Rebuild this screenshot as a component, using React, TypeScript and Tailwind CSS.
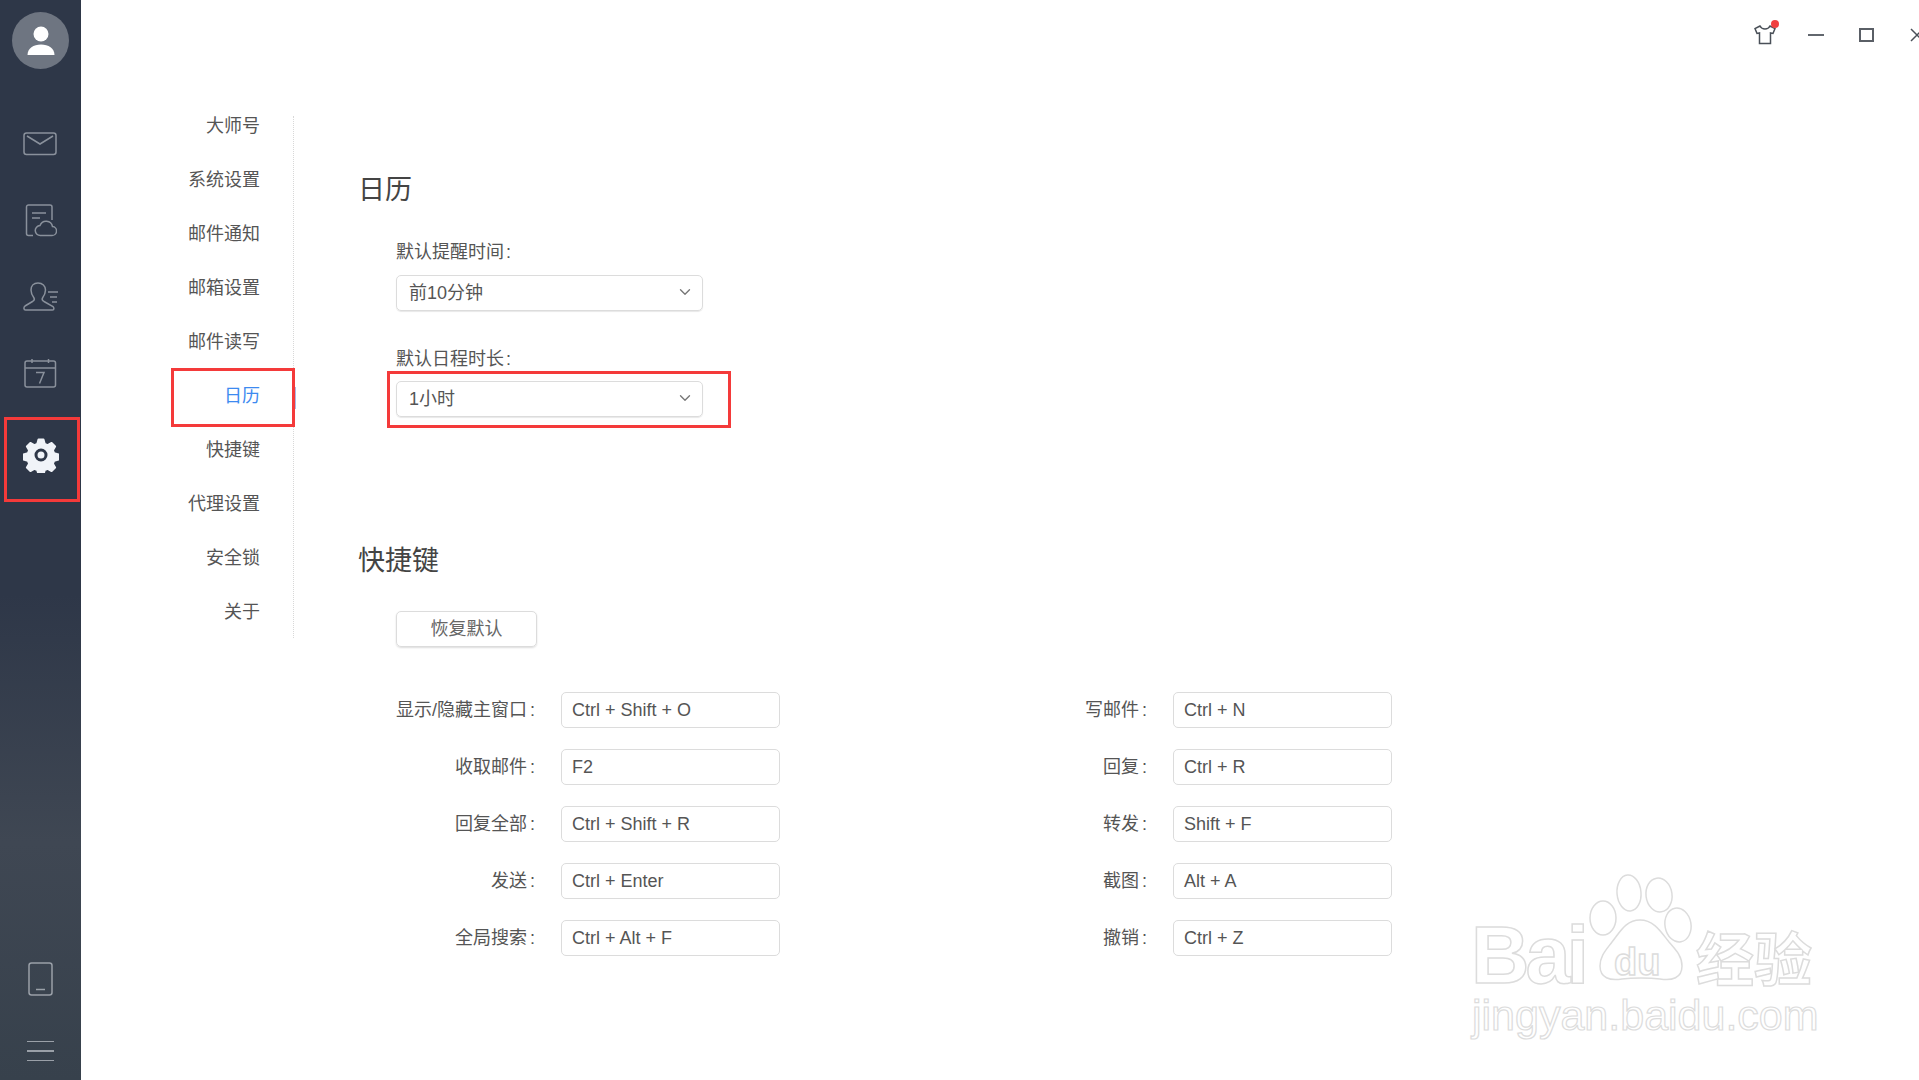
import React from 'react';
import { ChevronDown } from 'lucide-react';

const navItems = ['大师号', '系统设置', '邮件通知', '邮箱设置', '邮件读写', '日历', '快捷键', '代理设置', '安全锁', '关于'];

const shortcuts = [
  ['显示/隐藏主窗口', 'Ctrl + Shift + O', '写邮件', 'Ctrl + N'],
  ['收取邮件', 'F2', '回复', 'Ctrl + R'],
  ['回复全部', 'Ctrl + Shift + R', '转发', 'Shift + F'],
  ['发送', 'Ctrl + Enter', '截图', 'Alt + A'],
  ['全局搜索', 'Ctrl + Alt + F', '撤销', 'Ctrl + Z'],
];

const Sidebar: React.FC = () => {
  return (
    <aside className="w-[81px] h-full shrink-0 flex flex-col items-center bg-[linear-gradient(180deg,#2e3748_0%,#2e3748_55%,#3f4753_78%,#37414c_100%)]">
      <div className="mt-3 w-[57px] h-[57px] rounded-full bg-[#6e7581] flex items-center justify-center">
        <svg width="28" height="30" viewBox="0 0 28 30" fill="#fff">
          <circle cx="14" cy="8" r="7.5" />
          <path d="M0.5 29c0-6.5 6-10.5 13.5-10.5S27.500 22.500 27.500 29z" />
        </svg>
      </div>
      <div className="mt-[36px] h-[77px] flex items-center">
        <svg width="35" height="24" viewBox="0 0 35 24" fill="none" stroke="#8a919c" strokeWidth="1.5">
          <rect x="1" y="1" width="32" height="21.500" rx="2.500" />
          <path d="M4 4l13 8 13-8" />
        </svg>
      </div>
      <div className="h-[77px] flex items-center">
        <svg width="32" height="33" viewBox="0 0 32 33" fill="none" stroke="#8a919c" strokeWidth="1.5">
          <path d="M8 31.500H3.500A2 2 0 0 1 1.500 29.500V3A2 2 0 0 1 3.500 1H25A2 2 0 0 1 27 3V16" />
          <path d="M7 9h14M7 14h8" />
          <path d="M15 31.500h11.500a4.500 4.500 0 0 0 1-9 6.500 6.500 0 0 0-12.500-1 5 5 0 0 0 .500 10z" />
        </svg>
      </div>
      <div className="h-[75px] flex items-center">
        <svg width="36" height="30" viewBox="0 0 36 30" fill="none" stroke="#8a919c" strokeWidth="1.5">
          <path d="M15 1c-4.500 0-7 3-7 7 0 3 1.500 6 3 8 1 1.500 0 2.500-1.500 3.500L2 24c-1.500 1-1.500 4 .500 4h27c2 0 1.500-2.500.500-3.500L21 19.500c-1.500-1-2.500-2-1.500-3.500 1.500-2 3-5 3-8 0-4-3-7-7.500-7z" />
          <path d="M25 10h10M27 15h7M29 20h5" />
        </svg>
      </div>
      <div className="h-[77px] flex items-center">
        <svg width="33" height="30" viewBox="0 0 33 30" fill="none" stroke="#8a919c" strokeWidth="1.5">
          <rect x="1" y="3" width="30.500" height="26" rx="2" />
          <path d="M1 10h30.500M8 1v4M24.500 1v4" />
          <path d="M12 14.500h8l-4.500 11" />
        </svg>
      </div>
      <div className="mt-[5px] h-[77px] flex items-center">
        <svg width="36" height="36" viewBox="0 0 36 36">
          <path
            fillRule="evenodd"
            fill="#f0f3f8"
            stroke="#f0f3f8"
            strokeWidth="2"
            strokeLinejoin="round"
            d="M15.500 2.500h5l1.200 4.300 3 1.300 3.900-2.200 3.500 3.500-2.200 3.900 1.300 3 4.300 1.200v5l-4.300 1.200-1.300 3 2.200 3.900-3.500 3.500-3.900-2.200-3 1.300-1.200 4.300h-5l-1.200-4.300-3-1.300-3.900 2.200-3.500-3.500 2.200-3.900-1.300-3-4.300-1.200v-5l4.300-1.200 1.300-3-2.200-3.900 3.500-3.500 3.900 2.200 3-1.300z"
          />
          <circle cx="18" cy="18" r="5" fill="none" stroke="#2e3748" strokeWidth="3" />
        </svg>
      </div>
      <div className="mt-auto mb-[45px]">
        <svg width="25" height="34" viewBox="0 0 25 34" fill="none" stroke="#9aa0a8" strokeWidth="1.5" className="block">
          <rect x="1" y="1" width="23" height="32" rx="2.500" />
          <path d="M8 27.500h9" />
        </svg>
      </div>
      <div className="mb-[19px] w-[27px] flex flex-col gap-[8px]">
        <div className="h-[1.500px] bg-[#9aa0a8]" />
        <div className="h-[1.500px] bg-[#9aa0a8]" />
        <div className="h-[1.500px] bg-[#9aa0a8]" />
      </div>
    </aside>
  );
};

const SelectBox: React.FC<{ value: string }> = ({ value }) => {
  return (
    <div className="w-[307px] h-[36px] rounded-[5px] border border-[#dcdcdc] shadow-[0_1px_1px_#e8e8e8] flex items-center justify-between pl-[12px] pr-[8px] text-[18px] text-[#555]">
      <span>{value}</span>
      <ChevronDown size={18} color="#777" strokeWidth={1.8} className="-mt-[2px]" />
    </div>
  );
};

const KeyRow: React.FC<{ label: string; value: string }> = ({ label, value }) => {
  return (
    <div className="flex items-center h-[36px]">
      <div className="w-[140px] text-right text-[18px] text-[#555] whitespace-nowrap">
        {label}
        <span className="ml-[3px] mr-[1px]">:</span>
      </div>
      <div className="ml-[25px] w-[219px] h-[36px] rounded-[5px] border border-[#dcdcdc] flex items-center pl-[10px] text-[18px] text-[#555]">
        {value}
      </div>
    </div>
  );
};

const Watermark: React.FC = () => {
  return (
    <svg width="400" height="200" viewBox="0 0 400 200" className="absolute left-[1440px] top-[850px] pointer-events-none">
      <g fill="#fff" stroke="#dcdcdc" strokeWidth="1.500">
        <ellipse cx="163" cy="68" rx="13" ry="17" />
        <ellipse cx="189" cy="43" rx="12" ry="18" transform="rotate(-5 189 43)" />
        <ellipse cx="219" cy="45" rx="13" ry="17" transform="rotate(-8 219 45)" />
        <ellipse cx="238" cy="75" rx="13" ry="17" transform="rotate(-10 238 75)" />
        <path d="M200 70c-14 0-20 12-28 22-6 8-12 14-12 24 0 12 10 15 22 13 8-1 12-1 19-1s11 0 19 1c12 2 22-1 22-13 0-10-6-16-13-24-8-10-15-22-29-22z" />
        <text x="31" y="133" fontFamily="Liberation Sans, sans-serif" fontSize="81" fontWeight="700" letterSpacing="-4">Bai</text>
        <text x="174" y="125" fontFamily="Liberation Sans, sans-serif" fontSize="38" fontWeight="700">du</text>
        <text x="256" y="131" fontFamily="Noto Sans CJK SC, sans-serif" fontSize="58" fontWeight="700">经验</text>
      </g>
      <text x="32" y="180" fontFamily="Liberation Sans, sans-serif" fontSize="43" fill="#fff" stroke="#dcdcdc" strokeWidth="1.200">jingyan.baidu.com</text>
    </svg>
  );
};

export default function App() {
  return (
    <div className="relative w-[1919px] h-[1080px] overflow-hidden bg-white flex font-['Liberation_Sans','Noto_Sans_CJK_SC',sans-serif]">
      <Sidebar />

      {/* settings menu */}
      <nav className="w-[214px] shrink-0 pt-[116px]">
        <div className="relative flex flex-col h-[522px] w-[213px] border-r border-dotted border-[#d8d8d8]">
          <ul className="-mt-[17px]">
            {navItems.map((item) => (
              <li
                key={item}
                className={`h-[54px] flex items-center justify-end pr-[33px] text-[18px] ${item === '日历' ? 'text-[#3d8af0]' : 'text-[#555]'}`}
              >
                {item}
              </li>
            ))}
          </ul>
          <div className="absolute right-[-3px] top-[271px] w-[3px] h-[22px] bg-[#a9bbe5]" />
        </div>
      </nav>

      <main className="flex-1 pl-[63px]">
        <h2 className="mt-[172px] text-[27px] leading-[36px] text-[#444]">日历</h2>
        <div className="pl-[38px]">
          <div className="mt-[31px] text-[18px] leading-[26px] text-[#555]">
            默认提醒时间<span className="ml-[2px]">:</span>
          </div>
          <div className="mt-[10px]">
            <SelectBox value="前10分钟" />
          </div>
          <div className="mt-[35px] text-[18px] leading-[26px] text-[#555]">
            默认日程时长<span className="ml-[2px]">:</span>
          </div>
          <div className="mt-[9px]">
            <SelectBox value="1小时" />
          </div>
        </div>

        <h2 className="mt-[126px] text-[27px] leading-[36px] text-[#444]">快捷键</h2>
        <div className="pl-[38px]">
          <button className="mt-[32px] block w-[141px] h-[36px] rounded-[5px] border border-[#dcdcdc] shadow-[0_1px_2px_#dcdcdc] text-[18px] text-[#666]">
            恢复默认
          </button>
          <div className="mt-[45px] flex flex-col gap-[21px]">
            {shortcuts.map(([l1, v1, l2, v2]) => (
              <div key={l1} className="flex gap-[228px]">
                <KeyRow label={l1} value={v1} />
                <KeyRow label={l2} value={v2} />
              </div>
            ))}
          </div>
        </div>
      </main>

      {/* window buttons */}
      <div className="absolute top-0 right-0 h-[70px] flex items-center">
        <div className="relative">
          <svg width="22" height="20" viewBox="0 0 22 20" fill="none" stroke="#4a5058" strokeWidth="1.500" className="block">
            <path d="M6 1L1 3.500l2 5 2.500-.5V18.500h11V8l2.500.5 2-5L16 1c-1 2-2.500 3-5 3S7 3 6 1z" />
          </svg>
          <div className="absolute -top-[5px] right-[-3px] w-[8px] h-[8px] rounded-full bg-[#f04040]" />
        </div>
        <div className="ml-[32px] w-[16px] h-[2px] bg-[#62676e]" />
        <div className="ml-[35px] w-[15px] h-[14px] border-2 border-[#5a5f66]" />
        <div className="ml-[36px] w-[9px] overflow-hidden">
          <svg width="14" height="14" viewBox="0 0 14 14" stroke="#4a5058" strokeWidth="1.500" className="block">
            <path d="M1 1l12 12M13 1L1 13" />
          </svg>
        </div>
      </div>

      {/* red annotation boxes */}
      <div className="absolute left-[4px] top-[417px] w-[76px] h-[85px] border-[3px] border-[#f43a3a]" />
      <div className="absolute left-[171px] top-[368px] w-[124px] h-[59px] border-[3px] border-[#f43a3a]" />
      <div className="absolute left-[387px] top-[371px] w-[344px] h-[57px] border-[3px] border-[#f43a3a]" />

      <Watermark />
    </div>
  );
}
